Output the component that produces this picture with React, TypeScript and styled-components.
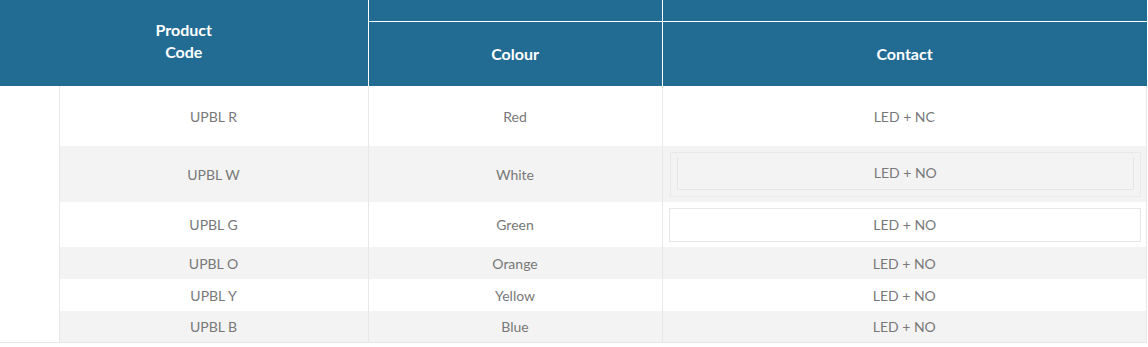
import React from "react";
import styled, { createGlobalStyle } from "styled-components";

const rows = [
  { code: "UPBL R", colour: "Red", contact: "LED + NC", height: 60, boxed: 0 },
  { code: "UPBL W", colour: "White", contact: "LED + NO", height: 56, boxed: 2 },
  { code: "UPBL G", colour: "Green", contact: "LED + NO", height: 45, boxed: 1 },
  { code: "UPBL O", colour: "Orange", contact: "LED + NO", height: 32, boxed: 0 },
  { code: "UPBL Y", colour: "Yellow", contact: "LED + NO", height: 32, boxed: 0 },
  { code: "UPBL B", colour: "Blue", contact: "LED + NO", height: 31, boxed: 0 },
];

const App = () => {
  return (
    <>
      <GlobalStyle />
      <Table>
        <colgroup>
          <col style={{ width: 59 }} />
          <col style={{ width: 309 }} />
          <col style={{ width: 294 }} />
          <col />
        </colgroup>
        <thead>
          <HeadRow h={21}>
            <HeadCell colSpan={2} rowSpan={2} $lead>
              Product
              <br />
              Code
            </HeadCell>
            <HeadCell $top />
            <HeadCell $top />
          </HeadRow>
          <HeadRow h={65}>
            <HeadCell>Colour</HeadCell>
            <HeadCell>Contact</HeadCell>
          </HeadRow>
        </thead>
        <tbody>
          {rows.map((row, i) => (
            <Row key={row.code} h={row.height}>
              <Blank />
              <Cell striped={i % 2 === 1}>{row.code}</Cell>
              <Cell striped={i % 2 === 1}>{row.colour}</Cell>
              <Cell striped={i % 2 === 1}>
                {row.boxed === 2 ? (
                  <OuterBox>
                    <InnerBox>{row.contact}</InnerBox>
                  </OuterBox>
                ) : row.boxed === 1 ? (
                  <PlainBox>{row.contact}</PlainBox>
                ) : (
                  row.contact
                )}
              </Cell>
            </Row>
          ))}
        </tbody>
      </Table>
    </>
  );
};

export default App;

const GlobalStyle = createGlobalStyle`
  html, body {
    margin: 0;
    padding: 0;
    background: #fff;
  }
  body {
    font-family: "Lato", "Open Sans", sans-serif;
  }
`;

const Table = styled.table`
  width: 1147px;
  border-collapse: collapse;
  table-layout: fixed;
  border-bottom: 1px solid #e6e6e6;
`;

const HeadRow = styled.tr<{ h: number }>`
  height: ${({ h }) => h}px;
`;

const HeadCell = styled.th<{ $top?: boolean; $lead?: boolean }>`
  background: #226c94;
  color: #fff;
  font-size: 16px;
  font-weight: 700;
  line-height: 22px;
  text-align: center;
  vertical-align: middle;
  padding: ${({ $lead }) => ($lead ? "0 0 5px 0" : "0")};
  border-left: ${({ $lead }) => ($lead ? "none" : "1px solid #fff")};
  border-bottom: ${({ $top }) => ($top ? "1px solid #fff" : "none")};
`;

const Row = styled.tr<{ h: number }>`
  height: ${({ h }) => h}px;
`;

const Blank = styled.td`
  padding: 0;
`;

const Cell = styled.td<{ striped: boolean }>`
  background: ${({ striped }) => (striped ? "#f3f3f3" : "#fff")};
  color: #787878;
  font-size: 14px;
  text-align: center;
  padding: 0;
  border-left: 1px solid #e8e8e8;
  border-right: 1px solid #e8e8e8;
`;

const OuterBox = styled.div`
  margin: 1px 5px 0 7px;
  border: 1px solid #e9e9e9;
  padding: 4px 6px 6px 6px;
`;

const InnerBox = styled.div`
  border: 1px solid #e6e6e6;
  border-top: none;
  height: 32px;
  line-height: 32px;
`;

const PlainBox = styled.div`
  margin: 0 5px 0 6px;
  border: 1px solid #e6e6e6;
  background: #fff;
  height: 32px;
  line-height: 32px;
`;
